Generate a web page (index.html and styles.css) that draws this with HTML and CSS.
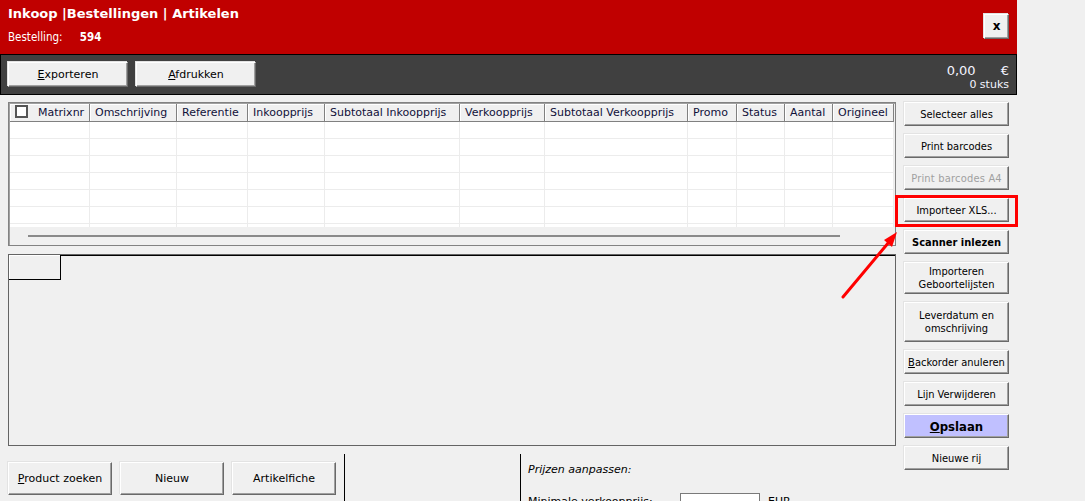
FILE: index.html
```html
<!DOCTYPE html>
<html lang="nl">
<head>
<meta charset="UTF-8">
<title>Inkoop - Bestellingen - Artikelen</title>
<link rel="stylesheet" href="styles.css">
</head>
<body>
<div class="app">
  <div class="header">
    <div>
      <div class="title">Inkoop |Bestellingen | Artikelen</div>
      <div class="order">Bestelling: <b>594</b></div>
    </div>
    <button class="btn close">x</button>
  </div>

  <div class="toolbar">
    <button class="btn tool"><u>E</u>xporteren</button>
    <button class="btn tool"><u>A</u>fdrukken</button>
    <div class="totals">
      <div class="amount">0,00 <span class="eur">&euro;</span></div>
      <div>0 stuks</div>
    </div>
  </div>

  <div class="main">
    <div class="left">
      <div class="grid">
        <div class="rows">
          <table>
            <colgroup>
              <col style="width:80px"><col style="width:87px"><col style="width:71px"><col style="width:77px">
              <col style="width:135px"><col style="width:85px"><col style="width:143px"><col style="width:49px">
              <col style="width:48px"><col style="width:48px"><col style="width:61px">
            </colgroup>
            <tr>
              <th><span class="check"></span>Matrixnr</th>
              <th>Omschrijving</th>
              <th>Referentie</th>
              <th>Inkoopprijs</th>
              <th>Subtotaal Inkoopprijs</th>
              <th>Verkoopprijs</th>
              <th>Subtotaal Verkoopprijs</th>
              <th>Promo</th>
              <th>Status</th>
              <th>Aantal</th>
              <th>Origineel</th>
            </tr>
            <tr><td></td><td></td><td></td><td></td><td></td><td></td><td></td><td></td><td></td><td></td><td></td></tr>
            <tr><td></td><td></td><td></td><td></td><td></td><td></td><td></td><td></td><td></td><td></td><td></td></tr>
            <tr><td></td><td></td><td></td><td></td><td></td><td></td><td></td><td></td><td></td><td></td><td></td></tr>
            <tr><td></td><td></td><td></td><td></td><td></td><td></td><td></td><td></td><td></td><td></td><td></td></tr>
            <tr><td></td><td></td><td></td><td></td><td></td><td></td><td></td><td></td><td></td><td></td><td></td></tr>
            <tr><td></td><td></td><td></td><td></td><td></td><td></td><td></td><td></td><td></td><td></td><td></td></tr>
            <tr><td></td><td></td><td></td><td></td><td></td><td></td><td></td><td></td><td></td><td></td><td></td></tr>
          </table>
        </div>
        <div class="hscroll"><div class="thumb"></div></div>
      </div>

      <div class="panel">
        <div class="tabs">
          <div class="tab"></div>
          <div class="tabline"></div>
        </div>
      </div>

      <div class="bottom">
        <div class="actions">
          <button class="btn big"><u>P</u>roduct zoeken</button>
          <button class="btn big">Nieuw</button>
          <button class="btn big">Artikelfiche</button>
        </div>
        <div class="sep"></div>
        <div class="spacer"></div>
        <div class="sep"></div>
        <div class="prices">
          <div class="prices-title">Prijzen aanpassen:</div>
          <div class="price-row">
            <span class="price-label">Minimale verkoopprijs:</span>
            <span class="price-input"></span>
            <span class="price-unit">EUR</span>
          </div>
        </div>
      </div>
    </div>

    <div class="side">
      <button class="btn">Selecteer alles</button>
      <button class="btn">Print barcodes</button>
      <button class="btn disabled">Print barcodes A4</button>
      <button class="btn">Importeer XLS...</button>
      <button class="btn strong">Scanner inlezen</button>
      <button class="btn h32">Importeren<br>Geboortelijsten</button>
      <button class="btn h40">Leverdatum en<br>omschrijving</button>
      <button class="btn"><u>B</u>ackorder anuleren</button>
      <button class="btn">Lijn Verwijderen</button>
      <button class="btn save"><u>O</u>pslaan</button>
      <button class="btn">Nieuwe rij</button>
    </div>
  </div>

  <!-- markering rond de importknop -->
  <div class="highlight"></div>
  <svg class="arrow" width="64" height="78" viewBox="0 0 64 78">
    <line x1="5" y1="71" x2="51" y2="16" stroke="#f00" stroke-width="3" stroke-linecap="round"/>
    <polygon points="59,6 46,14 54,21" fill="#f00"/>
  </svg>
</div>
</body>
</html>
```

FILE: styles.css
```css
* {
  box-sizing: border-box;
}
body {
  margin: 0;
  background-color: #f0f0f0;
  font-family: "DejaVu Sans", Verdana, sans-serif;
  font-size: 11px;
  color: #000;
  height: 501px;
  overflow: hidden;
}
.app {
  width: 1017px;
  position: relative;
}

/* kop */
.header {
  background-color: #c00000;
  height: 55px;
  border-bottom: 1px solid #000;
  padding: 0 8px;
  display: flex;
  justify-content: space-between;
  align-items: flex-start;
  color: #fff;
}
.title {
  font-family: "DejaVu Sans", sans-serif;
  font-weight: bold;
  font-size: 13px;
  line-height: 16px;
  margin-top: 6px;
}
.order {
  font-family: "DejaVu Sans Condensed", "DejaVu Sans", sans-serif;
  font-size: 11.5px;
  line-height: 16px;
  margin-top: 7px;
}
.order b {
  margin-left: 14px;
}

/* knoppen */
.btn {
  font-family: "DejaVu Sans Condensed", "DejaVu Sans", sans-serif;
  font-size: 11px;
  color: #000;
  background-color: #f0f0f0;
  border: 1px solid;
  border-color: #fff #696969 #696969 #fff;
  box-shadow: inset -1px -1px 0 #a0a0a0, -1px -1px 0 #e3e3e3;
  padding: 0;
  height: 24px;
  line-height: 13px;
  cursor: pointer;
}
.close {
  margin-top: 14px;
  width: 25px;
  height: 25px;
  font-family: "DejaVu Sans", sans-serif;
  font-weight: bold;
  font-size: 12px;
}

/* werkbalk */
.toolbar {
  background-color: #404040;
  height: 40px;
  border: 1px solid #000;
  border-top: 0;
  padding: 7px 7px 0 7px;
  display: flex;
  align-items: flex-start;
  gap: 8px;
}
.tool {
  width: 120px;
  height: 25px;
  font-family: "DejaVu Sans", sans-serif;
}
.totals {
  margin-left: auto;
  margin-top: 1px;
  text-align: right;
  color: #f4f4ff;
  line-height: 14px;
}
.amount {
  font-size: 13px;
  line-height: 15px;
}
.eur {
  display: inline-block;
  margin-left: 21px;
}

/* hoofdgedeelte */
.main {
  display: flex;
  gap: 8px;
  padding: 7px 0 0 8px;
}
.left {
  width: 888px;
}
.grid {
  height: 144px;
  border: 1px solid #828282;
  padding: 1px;
  box-shadow: inset 1px 1px 0 #a0a0a0;
  background-color: #f0f0f0;
}
.rows {
  height: 123px;
  overflow: hidden;
  background-color: #fff;
}
table {
  width: 884px;
  table-layout: fixed;
  border-collapse: separate;
  border-spacing: 0;
}
th {
  background-color: #f0f0f0;
  font-weight: normal;
  text-align: left;
  padding: 1px 0 0 5px;
  line-height: 16px;
  color: #10103a;
  border-right: 1px solid #808080;
  border-bottom: 1px solid #808080;
  box-shadow: inset 1px 1px 0 #fff;
  white-space: nowrap;
  overflow: hidden;
}
td {
  padding: 0;
  height: 17px;
  border-right: 1px solid #ececec;
  border-bottom: 1px solid #ececec;
}
.check {
  display: inline-block;
  width: 13px;
  height: 13px;
  border: 2px solid #555;
  background-color: #fff;
  vertical-align: -2px;
  margin-right: 10px;
}
.hscroll {
  height: 17px;
  padding: 8px 0 0 18px;
}
.thumb {
  width: 812px;
  height: 2px;
  background-color: #8a8a8a;
}

.panel {
  margin-top: 8px;
  height: 192px;
  border: 1px solid #646464;
}
.tabs {
  display: flex;
}
.tab {
  width: 52px;
  height: 25px;
  border-right: 1px solid #000;
  border-bottom: 1px solid #000;
  box-shadow: inset 1px 1px 0 #fff;
}
.tabline {
  flex: 1;
  border-top: 1px solid #000;
}

/* onderkant */
.bottom {
  display: flex;
  margin-top: 8px;
  height: 60px;
}
.actions {
  display: flex;
  gap: 8px;
  padding: 8px 8px 0 0;
}
.big {
  width: 104px;
  height: 33px;
  font-family: "DejaVu Sans", sans-serif;
}
.sep {
  width: 1px;
  background-color: #000;
}
.spacer {
  width: 175px;
}
.prices {
  padding: 9px 0 0 7px;
}
.prices-title {
  font-style: italic;
  line-height: 14px;
}
.price-row {
  display: flex;
  align-items: flex-start;
  margin-top: 16px;
}
.price-label {
  width: 152px;
  line-height: 16px;
  margin-top: 1px;
}
.price-input {
  width: 80px;
  height: 20px;
  border: 1px solid #7a7a7a;
  background-color: #fff;
}
.price-unit {
  margin: 1px 0 0 8px;
  line-height: 16px;
}

/* rechterkolom */
.side {
  width: 105px;
  display: flex;
  flex-direction: column;
  gap: 8px;
}
.side .btn {
  width: 105px;
}
.side .h32 {
  height: 32px;
}
.side .h40 {
  height: 40px;
}
.disabled {
  color: #a0a0a0;
  letter-spacing: 0.2px;
}
.strong {
  font-weight: bold;
}
.side .save {
  background-color: #c0c0ff;
  font-weight: bold;
  font-size: 13px;
}

.highlight {
  position: absolute;
  left: 895px;
  top: 195px;
  width: 123px;
  height: 32px;
  border: 3px solid #f00;
}
.arrow {
  position: absolute;
  left: 838px;
  top: 226px;
}
```
